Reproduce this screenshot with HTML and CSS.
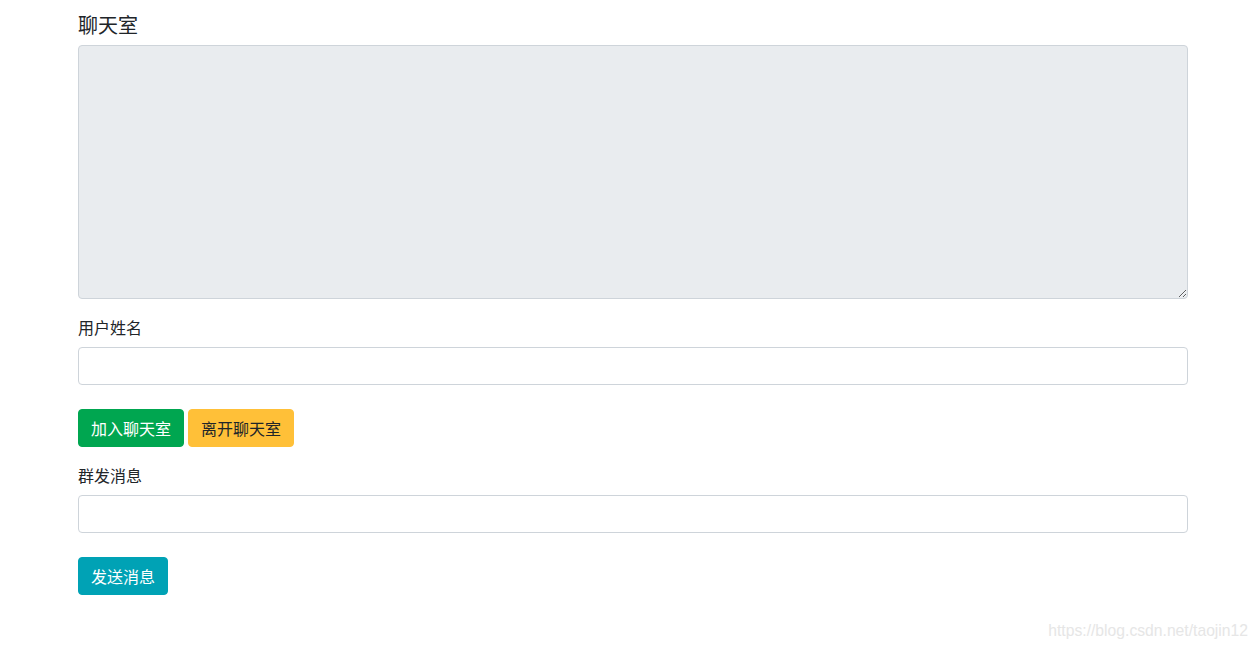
FILE: index.html
```html
<!DOCTYPE html>
<html lang="zh-CN">
<head>
<meta charset="utf-8">
<title>聊天室</title>
<link rel="stylesheet" href="styles.css">
</head>
<body>
<div class="container">
  <h5 class="title">聊天室</h5>
  <div class="form-group">
    <textarea class="form-control chat-box" readonly></textarea>
  </div>
  <div class="form-group">
    <label class="label">用户姓名</label>
    <input class="form-control" type="text">
  </div>
  <div class="btn-row">
    <button class="btn btn-success">加入聊天室</button>
    <button class="btn btn-warning">离开聊天室</button>
  </div>
  <div class="form-group">
    <label class="label">群发消息</label>
    <input class="form-control" type="text">
  </div>
  <div class="btn-row">
    <button class="btn btn-info">发送消息</button>
  </div>
</div>
<div class="watermark">https://blog.csdn.net/taojin12</div>
</body>
</html>
```

FILE: styles.css
```css
html, body {
  margin: 0;
  padding: 0;
  background: #fff;
}
body {
  font-family: "Noto Sans CJK SC", "Liberation Sans", sans-serif;
  font-size: 16px;
  line-height: 1.5;
  color: #212529;
  height: 649px;
  position: relative;
  overflow: hidden;
}
.container {
  width: 1110px;
  margin-left: 78px;
  padding-top: 13px;
}
.title {
  font-size: 20px;
  font-weight: 400;
  line-height: 24px;
  margin: 0 0 8px 0;
}
.form-group {
  margin-bottom: 16px;
}
.label {
  display: block;
  line-height: 24px;
  margin-bottom: 8px;
}
.form-control {
  display: block;
  box-sizing: border-box;
  width: 100%;
  height: 38px;
  padding: 6px 12px;
  font-size: 16px;
  font-family: inherit;
  color: #495057;
  background: #fff;
  border: 1px solid #ced4da;
  border-radius: 4px;
  margin: 0;
  outline: none;
}
.chat-box {
  height: 254px;
  background: #e9ecef;
  resize: vertical;
}
.btn-row {
  margin-top: 24px;
  margin-bottom: 16px;
  display: flex;
  gap: 4px;
}
.btn {
  box-sizing: border-box;
  height: 38px;
  padding: 0 12px;
  font-size: 16px;
  font-family: inherit;
  line-height: 36px;
  border: 1px solid transparent;
  border-radius: 4px;
  cursor: pointer;
}
.btn-success {
  background: #00a650;
  border-color: #00a650;
  color: #fff;
}
.btn-warning {
  background: #ffc038;
  border-color: #ffc038;
  color: #212529;
}
.btn-info {
  background: #00a2b5;
  border-color: #00a2b5;
  color: #fff;
}
.watermark {
  position: absolute;
  right: 10px;
  top: 620px;
  font-family: "Liberation Sans", Arial, sans-serif;
  font-size: 15.7px;
  line-height: 22px;
  color: #e6e6e6;
}
```
